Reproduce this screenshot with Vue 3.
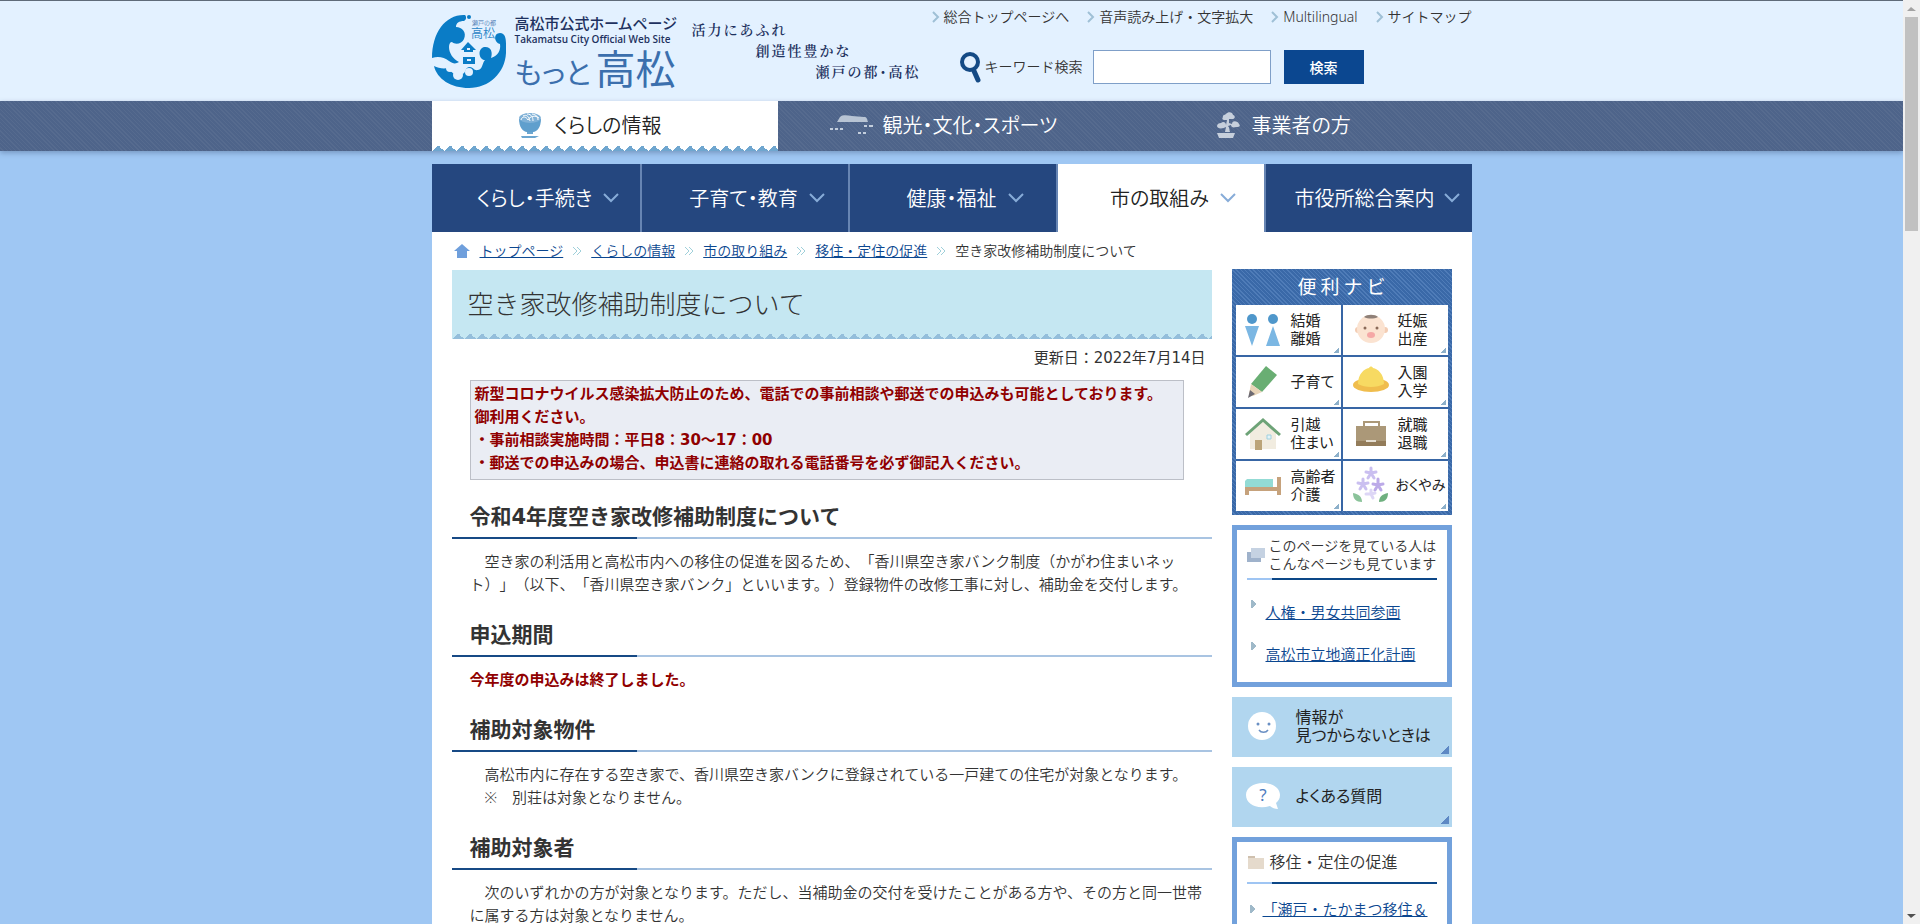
<script setup>
const utilityLinks = ['総合トップページへ', '音声読み上げ・文字拡大', 'Multilingual', 'サイトマップ']

const globalNav = [
  { label: 'くらし・手続き' },
  { label: '子育て・教育' },
  { label: '健康・福祉' },
  { label: '市の取組み', current: true },
  { label: '市役所総合案内' },
]

const crumbs = ['トップページ', 'くらしの情報', '市の取り組み', '移住・定住の促進']

const naviItems = [
  { icon: 'couple', lines: ['結婚', '離婚'] },
  { icon: 'baby', lines: ['妊娠', '出産'] },
  { icon: 'pencil', lines: ['子育て'] },
  { icon: 'hat', lines: ['入園', '入学'] },
  { icon: 'house', lines: ['引越', '住まい'] },
  { icon: 'bag', lines: ['就職', '退職'] },
  { icon: 'bed', lines: ['高齢者', '介護'] },
  { icon: 'flower', lines: ['おくやみ'] },
]
</script>

<template>
  <div class="screen">
    <div class="page">
      <header class="header">
        <div class="inner header-inner">
          <a href="#" class="brand" aria-label="高松市公式ホームページ">
            <svg class="logo" viewBox="0 0 74 74" aria-hidden="true">
              <path fill="#0a7cc6" d="M33 1C14 0 0 18 0 44c6-2 12-1 17 3 4 3 7 3 10 1-6-3-10-9-10-15 0-3 1-5 3-5 3 3 10 2 12-3 3-7-2-12-8-12 0-4 3-6 8-6 2-1 3-4 1-6z" />
              <circle cx="37" cy="3" r="2" fill="#0a7cc6" />
              <path fill="#0a7cc6" d="M2 52c4 2 9 3 14 2 5 6 9 9 14 6 5-1 2-7 8-7 3 0 4 4 8 3 5-1 4-7 7-10-6 0-8-11-1-13 7-1 9 5 7 11 7-2 10-8 9-14-6-1-7-11 0-11 5 0 6 5 6 11v9C73 59 57 74 37 74 19 74 5 65 2 52z" />
              <circle cx="18" cy="54" r="4" fill="#e3f1ff" />
              <circle cx="26" cy="61" r="5" fill="#e3f1ff" />
              <circle cx="37" cy="58" r="4" fill="#e3f1ff" />
              <path fill="#0a7cc6" d="M36 28l8 8h-3v2h-9v-2h-3zM31 43h12v7H31z" />
              <path fill="#e3f1ff" d="M35 34h3v2h-3zM35 45h4v2h-4z" />
              <text x="40" y="11" font-size="6" fill="#3b6fad" class="logo-text">瀬戸の都</text>
              <text x="39" y="24" font-size="12" fill="#2a83c6" class="logo-text">高松</text>
            </svg>
            <span class="brand-text">
              <span class="brand-ja">高松市公式ホームページ</span>
              <span class="brand-en">Takamatsu City Official Web Site</span>
              <span class="brand-motto">もっと<b>高松</b></span>
            </span>
          </a>
          <p class="tagline">
            <span>活力にあふれ</span>
            <span class="second">創造性豊かな</span>
            <span class="third">瀬戸の都・高松</span>
          </p>
          <div class="tools">
            <ul class="utility">
              <li v-for="link in utilityLinks" :key="link">
                <svg viewBox="0 0 8 12" width="8" height="12" aria-hidden="true"><path d="M1 1l5 5-5 5" fill="none" stroke="#9fc0d6" stroke-width="2" /></svg>
                <a href="#">{{ link }}</a>
              </li>
            </ul>
            <form class="search" @submit.prevent>
              <svg viewBox="0 0 21 32" width="21" height="32" aria-hidden="true">
                <circle cx="10" cy="11" r="8" fill="none" stroke="#144a85" stroke-width="4" />
                <path d="M14 20l4 9" stroke="#144a85" stroke-width="5" stroke-linecap="round" />
              </svg>
              <label for="keyword">キーワード検索</label>
              <input id="keyword" type="text" />
              <button type="submit">検索</button>
            </form>
          </div>
        </div>
      </header>

      <nav class="site-nav">
        <div class="inner site-tabs">
          <a href="#" class="site-tab current">
            <svg viewBox="0 0 24 26" width="24" height="26" aria-hidden="true">
              <path d="M1 7h22c0 8-4 13-8 13H9C5 20 1 15 1 7z" fill="#5f9fcd" />
              <ellipse cx="12" cy="6" rx="11" ry="5" fill="#7fb1d7" />
              <path d="M3 8c1-4 5-4 7 0M5 4c4-2 6 1 7 5M9 2c5 0 6 4 6 7M14 2c5 1 6 3 6 6M10 8c2-4 7-5 11-2" fill="none" stroke="#fff" />
              <path d="M9 20h6v2H9zM3 24h18l-4 2H4z" fill="#6ba6d0" />
            </svg>
            <span>くらしの情報</span>
          </a>
          <a href="#" class="site-tab sights">
            <svg viewBox="0 0 44 20" width="44" height="20" aria-hidden="true">
              <path d="M7 7l3-5c4-3 8-1 12-1l12 1c3 0 3 2 4 5z" fill="#b8c4d4" />
              <path d="M0 14h3m2 0h3m2 0h3M34 11h3m2 0h4M28 18h3m2 0h3" stroke="#c3cedd" stroke-width="2" />
            </svg>
            <span>観光・文化・スポーツ</span>
          </a>
          <a href="#" class="site-tab">
            <svg viewBox="0 0 24 26" width="24" height="26" aria-hidden="true">
              <path d="M7 5c-1-2 2-2 3-3 2-3 7-2 7 1 3 1 2 4-1 4h-3v4l3 1c0-4 6-3 7 0 2 2 0 3-3 3-3 1-5 0-5-2l-3 1c2 2 1 4 2 6H9l1-5c-3 2-9 2-9-1 0-2 2-3 4-3 2-2 5-1 5 2l1-5H8C6 8 6 6 7 5z" fill="#c6cfdc" />
              <path d="M1 21h18l-2 5H3z" fill="#c6cfdc" />
            </svg>
            <span>事業者の方</span>
          </a>
        </div>
      </nav>

      <div class="inner container">
        <nav class="global-nav">
          <a v-for="item in globalNav" :key="item.label" href="#" :class="{ current: item.current }">
            <span>{{ item.label }}</span>
            <svg viewBox="0 0 16 10" width="16" height="10" aria-hidden="true"><path d="M1 1l7 7 7-7" fill="none" stroke="#87acd8" stroke-width="2" /></svg>
          </a>
        </nav>

        <nav class="crumbs">
          <svg class="home" viewBox="0 0 16 14" width="16" height="14" aria-hidden="true"><path d="M8 0l8 7h-3v7H3V7H0z" fill="#6f9fdc" /></svg>
          <template v-for="crumb in crumbs" :key="crumb">
            <a href="#">{{ crumb }}</a>
            <svg class="sep" viewBox="0 0 10 10" width="10" height="10" aria-hidden="true"><path d="M1 1l4 4-4 4M5 1l4 4-4 4" fill="none" stroke="#9fd0da" /></svg>
          </template>
          <span>空き家改修補助制度について</span>
        </nav>

        <div class="columns">
          <main class="article">
            <h1>空き家改修補助制度について</h1>
            <p class="updated">更新日：2022年7月14日</p>
            <div class="notice">
              新型コロナウイルス感染拡大防止のため、電話での事前相談や郵送での申込みも可能としております。<br />
              御利用ください。<br />
              ・事前相談実施時間：平日8：30～17：00<br />
              ・郵送での申込みの場合、申込書に連絡の取れる電話番号を必ず御記入ください。
            </div>

            <h2>令和4年度空き家改修補助制度について</h2>
            <p>　空き家の利活用と高松市内への移住の促進を図るため、「香川県空き家バンク制度（かがわ住まいネット）」（以下、「香川県空き家バンク」といいます。）登録物件の改修工事に対し、補助金を交付します。</p>

            <h2>申込期間</h2>
            <p class="alert">今年度の申込みは終了しました。</p>

            <h2>補助対象物件</h2>
            <p>　高松市内に存在する空き家で、香川県空き家バンクに登録されている一戸建ての住宅が対象となります。<br />　※　別荘は対象となりません。</p>

            <h2>補助対象者</h2>
            <p>　次のいずれかの方が対象となります。ただし、当補助金の交付を受けたことがある方や、その方と同一世帯に属する方は対象となりません。</p>
          </main>

          <aside class="side">
            <section class="navi">
              <h3>便利ナビ</h3>
              <div class="navi-grid">
                <a v-for="item in naviItems" :key="item.icon" href="#" class="navi-item">
                  <svg viewBox="0 0 40 40" width="40" height="40" aria-hidden="true">
                    <g v-if="item.icon === 'couple'">
                      <circle cx="9" cy="10" r="5" fill="#4f97cb" /><circle cx="30" cy="10" r="5" fill="#4f97cb" />
                      <path d="M2 17h14L9 37zM30 17l7 20H23z" fill="#7bb7e3" />
                    </g>
                    <g v-else-if="item.icon === 'baby'">
                      <circle cx="8" cy="21" r="3" fill="#f3cdb4" /><circle cx="35" cy="21" r="3" fill="#f3cdb4" />
                      <circle cx="21" cy="20" r="14" fill="#fbe3d1" />
                      <path d="M14 8c3-3 11-3 14 0-4 2-10 2-14 0z" fill="#8f8078" />
                      <circle cx="15" cy="19" r="1.500" fill="#8b6a58" /><circle cx="27" cy="19" r="1.500" fill="#8b6a58" />
                      <ellipse cx="21" cy="26" rx="4" ry="3" fill="#f5a7a5" />
                    </g>
                    <g v-else-if="item.icon === 'pencil'">
                      <path d="M23 5l11 9-15 17-11-8z" fill="#69ae73" />
                      <path d="M8 23l11 8-9 4-4-2z" fill="#e8d4b8" /><path d="M7 29l5 4-7 4z" fill="#6d6a72" />
                    </g>
                    <g v-else-if="item.icon === 'hat'">
                      <ellipse cx="21" cy="24" rx="18" ry="7" fill="#f0bd4d" />
                      <path d="M8 23C8 13 14 8 19 7c1-2 3-2 4 0 5 1 11 6 11 16-7 4-19 4-26 0z" fill="#f7da62" />
                    </g>
                    <g v-else-if="item.icon === 'house'">
                      <path d="M20 7L7 19v17h26V19z" fill="#f1ece0" />
                      <path d="M3 22L20 7l17 15" fill="none" stroke="#6da377" stroke-width="3" />
                      <path d="M12 27h7v10h-7z" fill="#bba479" /><path d="M24 22h4v4h-4z" fill="#e3f3f8" stroke="#9fd0df" />
                    </g>
                    <g v-else-if="item.icon === 'bag'">
                      <path d="M14 14V9h15v5" fill="none" stroke="#ab9878" stroke-width="2" />
                      <path d="M6 13h30v19H6z" fill="#ab9878" /><path d="M6 28h30v5H6z" fill="#937c5a" /><path d="M16 27h10v2H16z" fill="#e5ded1" />
                    </g>
                    <g v-else-if="item.icon === 'bed'">
                      <path d="M4 14h26v8H2v-6z" fill="#93dbd5" />
                      <path d="M2 22h32V12h4v18h-4v-4H6v4H2z" fill="#c6a27c" />
                    </g>
                    <g v-else>
                      <g stroke="#cabff0" stroke-width="3" stroke-linecap="round">
                        <path d="M21 3v5M21 8l5-1M21 8l3 5M21 8l-3 5M21 8l-5-1" />
                        <path d="M13 14v5M13 19l5-1M13 19l3 5M13 19l-3 5M13 19l-5-1" />
                        <path d="M28 14v6M28 20l5-1M28 20l3 5M28 20l-3 5M28 20l-5-1" stroke="#bcaae8" />
                        <path d="M21 25v4M21 29l4-1M21 29l2 4M16 29l5 0" stroke="#ddd6f6" />
                      </g>
                      <path d="M3 28c6 1 9 4 9 9-6 0-9-3-9-9z" fill="#8bc39a" /><path d="M38 28c-6 1-9 4-9 9 6 0 9-3 9-9z" fill="#6fb07f" />
                    </g>
                  </svg>
                  <span><template v-for="(line, i) in item.lines" :key="line"><br v-if="i" />{{ line }}</template></span>
                </a>
              </div>
            </section>

            <section class="related">
              <h3>
                <svg viewBox="0 0 18 15" width="18" height="15" aria-hidden="true"><path d="M0 4h14v10H0z" fill="#9fb2cb" /><path d="M4 0h14v10H4z" fill="#c5d2e2" /></svg>
                <span>このページを見ている人は<br />こんなページも見ています</span>
              </h3>
              <ul>
                <li><a href="#">人権・男女共同参画</a></li>
                <li><a href="#">高松市立地適正化計画</a></li>
              </ul>
            </section>

            <a href="#" class="help">
              <svg viewBox="0 0 36 32" width="36" height="32" aria-hidden="true">
                <circle cx="17" cy="16" r="14" fill="#fff" />
                <circle cx="13" cy="14" r="1.500" fill="#6a8fc3" /><circle cx="24" cy="14" r="1.500" fill="#6a8fc3" />
                <path d="M14 20c2 3 7 3 9 0" fill="none" stroke="#6a8fc3" stroke-width="1.500" />
              </svg>
              <span>情報が<br />見つからないときは</span>
            </a>
            <a href="#" class="help">
              <svg viewBox="0 0 36 32" width="36" height="32" aria-hidden="true">
                <path d="M18 3c10 0 17 5 17 12 0 4-2 6-4 8l2 6c-3 0-6-1-8-3-13 4-24-2-24-11C1 8 8 3 18 3z" fill="#fff" />
                <text x="18" y="21" text-anchor="middle" font-size="17" fill="#4e7cc0" class="question">?</text>
              </svg>
              <span>よくある質問</span>
            </a>

            <section class="related category">
              <h3>
                <svg viewBox="0 0 18 15" width="18" height="15" aria-hidden="true"><path d="M1 1h7v3H1z" fill="#cfc0ae" /><path d="M1 3h16v11H1z" fill="#e5dacc" /></svg>
                <span>移住・定住の促進</span>
              </h3>
              <ul>
                <li><a href="#">「瀬戸・たかまつ移住＆</a></li>
              </ul>
            </section>
          </aside>
        </div>
      </div>
    </div>

    <div class="scrollbar" aria-hidden="true">
      <svg viewBox="0 0 17 17" width="17" height="17"><path d="M4 11l4-4 5 4z" fill="#a3a3a3" /></svg>
      <div class="track"><div class="thumb"></div></div>
      <svg viewBox="0 0 17 17" width="17" height="17"><path d="M4 7l4 4 5-4z" fill="#505050" /></svg>
    </div>
  </div>
</template>

<style>
body {
  background: #9fc7f3;
}
</style>

<style scoped>
* {
  box-sizing: border-box;
}

.screen {
  display: flex;
  height: 100vh;
  overflow: hidden;
  color: #333;
  font-family: "Noto Sans", "Noto Sans CJK JP", sans-serif;
  font-size: 15px;
  font-weight: 350;
  line-height: 23px;
  text-spacing-trim: space-all;
}

.page {
  flex: 1;
  min-width: 0;
  overflow: hidden;
  border-top: 1px solid #5f6b79;
  background: #9fc7f3;
}

.inner {
  max-width: 1040px;
  margin: 0 auto;
}

svg {
  display: block;
  flex: none;
}

p, h1, h2, h3, ul {
  margin: 0;
  padding: 0;
}

ul {
  list-style: none;
}

a {
  color: #0b4790;
}

.header {
  background: #e3f1ff;
}

.header-inner {
  display: flex;
  height: 100px;
}

.brand {
  display: flex;
  gap: 9px;
  padding-top: 13px;
  color: #1e3160;
  text-decoration: none;
}

.logo {
  width: 74px;
  height: 74px;
}

.logo-text {
  font-family: "Noto Sans CJK JP", sans-serif;
}

.brand-text {
  display: flex;
  flex-direction: column;
  width: 160px;
  white-space: nowrap;
}

.brand-ja {
  font-size: 15px;
  font-weight: 500;
  line-height: 19px;
  font-feature-settings: "palt";
}

.brand-en {
  font-family: "Open Sans", sans-serif;
  font-size: 10px;
  font-weight: 600;
  line-height: 13px;
}

.brand-motto {
  color: #3b6fad;
  font-size: 29px;
  font-weight: 400;
  line-height: 46px;
  font-feature-settings: "palt";
}

.brand-motto b {
  margin-left: 5px;
  font-size: 40px;
  font-weight: 400;
}

.tagline {
  display: flex;
  flex-direction: column;
  width: 236px;
  padding: 19px 0 0 17px;
  color: #1e3160;
  font-family: "Liberation Serif", "Noto Serif CJK JP", "Noto Sans CJK JP", serif;
  font-size: 14px;
  font-weight: 600;
  letter-spacing: 2px;
  line-height: 21px;
  white-space: nowrap;
}

.tagline .second {
  padding-left: 64px;
}

.tagline .third {
  padding-left: 124px;
  font-feature-settings: "palt";
}

.tools {
  flex: 1;
}

.utility {
  display: flex;
  justify-content: flex-end;
  gap: 18px;
  padding-top: 4px;
  white-space: nowrap;
}

.utility li {
  display: flex;
  align-items: center;
  gap: 4px;
}

.utility a {
  color: #333;
  font-size: 14px;
  line-height: 24px;
  text-decoration: none;
}

.search {
  display: flex;
  align-items: center;
  margin-top: 21px;
  padding-left: 49px;
}

.search label {
  margin-left: 4px;
  padding-bottom: 2px;
  font-size: 14px;
}

.search input {
  width: 178px;
  height: 34px;
  margin: 0 13px 0 10px;
  border: 1px solid #7f9fc8;
  background: #fff;
}

.search button {
  width: 80px;
  height: 34px;
  border: 0;
  background: #0b4790;
  color: #fff;
  font: 500 14px "Noto Sans CJK JP", sans-serif;
}

.site-nav {
  position: relative;
  background: repeating-linear-gradient(45deg, #4e648a 0 2px, #566b8f 2px 3px);
  box-shadow: 0 2px 5px rgba(60, 80, 120, 0.4);
}

.site-tabs {
  display: grid;
  grid-template-columns: repeat(3, minmax(0, 1fr));
}

.site-tab {
  display: flex;
  align-items: center;
  justify-content: center;
  gap: 12px;
  height: 50px;
  padding: 0 30px 2px 0;
  color: #fff;
  font-size: 20px;
  font-feature-settings: "palt";
  text-decoration: none;
  white-space: nowrap;
}

.site-tab.sights {
  gap: 9px;
  padding-right: 16px;
}

.site-tab.current {
  background:
    conic-gradient(from 135deg at 50% 0, #6fa6cf 90deg, transparent 0) 0 100% / 12px 6px repeat-x,
    #fff;
  color: #222;
}

.container {
  min-height: 100vh;
  margin-top: 13px;
  background: #fff;
}

.global-nav {
  display: grid;
  grid-template-columns: repeat(5, minmax(0, 1fr));
}

.global-nav a {
  display: grid;
  grid-template-columns: 1fr auto 1fr;
  align-items: center;
  column-gap: 11px;
  height: 68px;
  padding-right: 2px;
  border-left: 2px solid #6785b3;
  background: #25477f;
  color: #fff;
  font-size: 20px;
  font-feature-settings: "palt";
  text-decoration: none;
  white-space: nowrap;
}

.global-nav a:first-child {
  border-left: 0;
}

.global-nav a:last-child {
  column-gap: 9px;
  padding-right: 8px;
}

.global-nav span {
  grid-column: 2;
}

.global-nav .current {
  background: #fff;
  color: #222;
}

.crumbs {
  display: flex;
  align-items: center;
  padding: 7px 22px;
  font-size: 14px;
  white-space: nowrap;
}

.home {
  margin-right: 10px;
}

.sep {
  margin: 0 9px;
}

.columns {
  display: flex;
  align-items: flex-start;
  gap: 20px;
  padding: 0 20px;
}

.article {
  flex: 1;
  min-width: 0;
  padding-top: 1px;
}

.article h1 {
  padding: 19px 16px 20px;
  background:
    conic-gradient(from 135deg at 50% 0, #94bedb 90deg, transparent 0) 0 100% / 12px 6px repeat-x,
    #c5e7f2;
  font-size: 26px;
  font-weight: 300;
  line-height: 30px;
}

.article p {
  margin: 0 4px 24px 18px;
}

.article .updated {
  margin: 8px 6px 10px;
  font-family: "DejaVu Sans", "Noto Sans CJK JP", sans-serif;
  font-weight: 400;
  text-align: right;
}

.notice {
  margin: 0 28px 22px 18px;
  padding: 2px 4px 4px;
  border: 1px solid #bcbfc7;
  background: #eaedf4;
  color: #900000;
  font-family: "DejaVu Sans", "Noto Sans CJK JP", sans-serif;
  font-weight: 700;
}

.article h2 {
  margin-bottom: 11px;
  padding: 0 18px 7px;
  background: linear-gradient(90deg, #174a85 185px, #a9c4e2 0) 0 100% / 100% 2px no-repeat;
  font-family: "DejaVu Sans", "Noto Sans CJK JP", sans-serif;
  font-size: 21px;
  font-weight: 700;
  line-height: 30px;
}

.article .alert {
  color: #900000;
  font-weight: 700;
}

.side {
  display: flex;
  flex-direction: column;
  gap: 10px;
  width: 220px;
}

.navi {
  padding: 0 4px 4px;
  background: repeating-linear-gradient(45deg, #3a69a8 0 2px, #4f7cb8 2px 3px);
}

.navi h3 {
  padding-left: 4px;
  color: #fff;
  font-size: 19px;
  font-weight: 400;
  letter-spacing: 4px;
  line-height: 36px;
  text-align: center;
}

.navi-grid {
  display: grid;
  grid-template-columns: repeat(2, minmax(0, 1fr));
  gap: 2px;
  background: #3866a5;
}

.navi-item {
  display: flex;
  align-items: center;
  gap: 8px;
  height: 50px;
  padding: 0 0 2px 7px;
  background: linear-gradient(135deg, transparent 50%, #8db0ca 0) calc(100% - 2px) calc(100% - 2px) / 6px 6px no-repeat, #fff;
  color: #222;
  font-size: 15px;
  font-weight: 400;
  font-feature-settings: "palt";
  line-height: 18px;
  text-decoration: none;
  white-space: nowrap;
}

.navi-item:last-child {
  gap: 6px;
  font-size: 14px;
}

.related {
  padding: 7px 10px 6px;
  border: 5px solid #72a1dc;
  background: #fff;
}

.related h3 {
  display: flex;
  align-items: center;
  gap: 4px;
  padding-bottom: 7px;
  background: linear-gradient(90deg, #9fc5f3 25px, #0c4787 0) 0 100% / 100% 2px no-repeat;
  font-size: 14px;
  font-weight: 350;
  line-height: 18px;
  white-space: nowrap;
}

.related ul {
  padding-top: 12px;
}

.related li {
  padding: 9px 0 10px 19px;
  background: conic-gradient(from 225deg at 100% 50%, #9fb9c9 90deg, transparent 0) 4px 8px / 5px 8px no-repeat;
  white-space: nowrap;
}

.category h3 {
  gap: 5px;
  padding-bottom: 9px;
  font-size: 16px;
  line-height: 26px;
}

.category li {
  padding: 2px 0 30px 16px;
  background-position: 3px 9px;
}

.help {
  display: flex;
  align-items: center;
  gap: 15px;
  height: 60px;
  padding: 0 0 2px 13px;
  background: linear-gradient(135deg, transparent 50%, #5d88c4 0) calc(100% - 3px) calc(100% - 3px) / 8px 8px no-repeat, #b1d6ef;
  color: #222;
  font-size: 16px;
  font-weight: 400;
  font-feature-settings: "palt";
  line-height: 18px;
  text-decoration: none;
}

.question {
  font-family: "Noto Sans", sans-serif;
}

.scrollbar {
  display: flex;
  flex-direction: column;
  width: 17px;
  background: #f0f0f0;
}

.track {
  flex: 1;
  padding: 0 2px;
}

.thumb {
  height: 24%;
  background: #c1c1c1;
}
</style>
